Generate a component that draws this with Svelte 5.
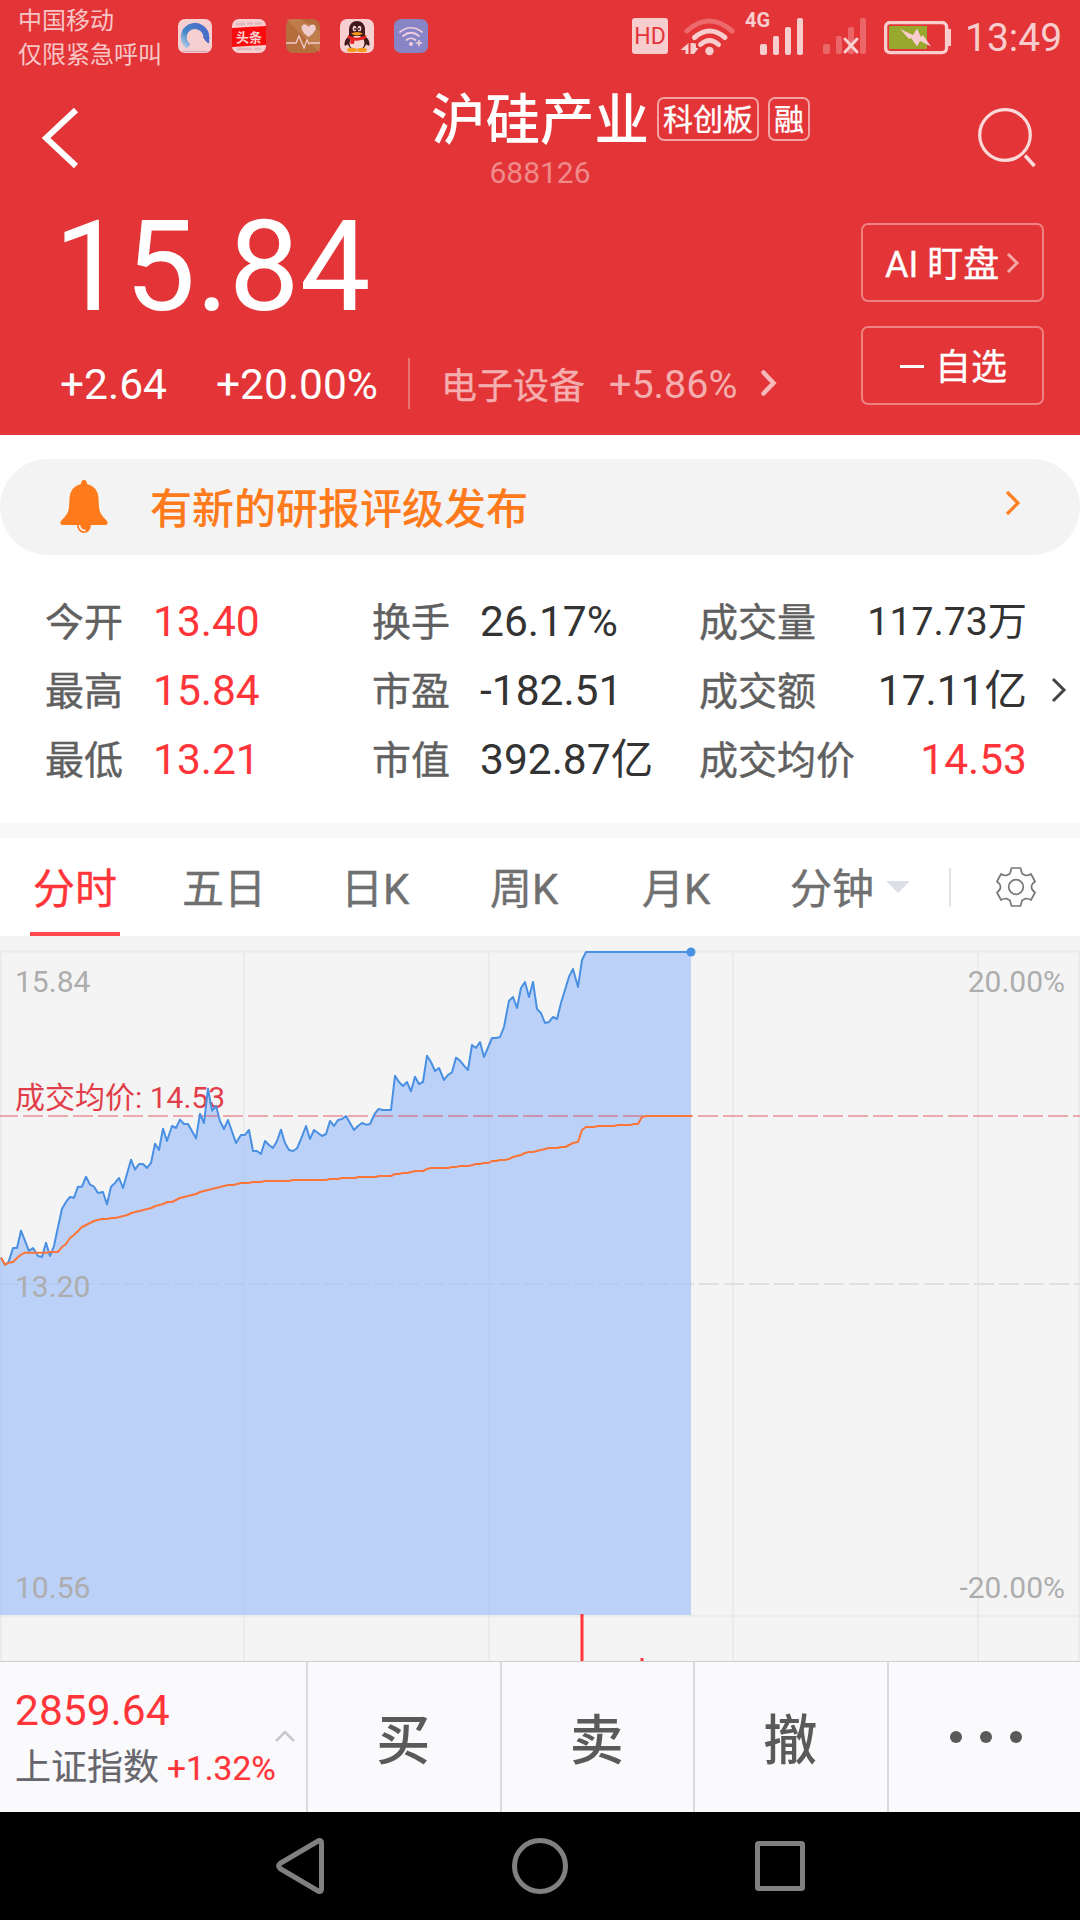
<script>
  const stats = [
    [
      { label: '今开', value: '13.40', up: true },
      { label: '最高', value: '15.84', up: true },
      { label: '最低', value: '13.21', up: true }
    ],
    [
      { label: '换手', value: '26.17%' },
      { label: '市盈', value: '-182.51' },
      { label: '市值', value: '392.87亿' }
    ],
    [
      { label: '成交量', value: '117.73万', compact: true },
      { label: '成交额', value: '17.11亿' },
      { label: '成交均价', value: '14.53', up: true }
    ]
  ];

  const actions = ['买', '卖', '撤'];

  // Intraday series, in thirds of a pixel, relative to the chart's scaled group.
  const price =
    '3,983 15,1004 26,995 39,954 51,954 63,902 87,963 99,954 114,978 126,981 138,938 150,978 162,948 174,891 186,836 198,816 210,801 222,803 234,770 246,770 258,740 270,764 282,770 294,789 309,786 321,823 333,770 345,759 357,744 369,774 393,689 405,719 417,702 429,702 441,714 453,699 465,641 477,660 489,596 501,633 516,588 528,594 540,569 552,582 564,582 588,625 600,551 612,579 624,476 636,542 648,528 660,573 672,597 684,570 708,639 723,615 735,615 747,600 759,663 771,663 783,672 795,633 807,645 819,654 831,633 843,599 855,639 867,660 879,663 891,655 903,627 918,588 930,627 942,600 966,618 978,612 990,573 1002,588 1014,570 1026,567 1038,558 1062,600 1074,588 1086,579 1098,584 1110,582 1124,552 1136,537 1148,540 1173,540 1185,437 1197,456 1209,468 1221,456 1233,484 1245,440 1257,462 1269,456 1281,377 1293,396 1305,423 1317,414 1332,450 1344,435 1356,427 1368,383 1380,392 1392,407 1404,420 1416,345 1428,354 1440,336 1452,381 1476,324 1488,324 1500,321 1512,291 1527,212 1539,201 1551,234 1563,174 1575,156 1587,201 1599,156 1611,237 1623,249 1635,279 1647,276 1659,261 1671,267 1683,219 1707,140 1719,117 1734,171 1746,90 1758,66 2073,66';
  const average =
    '3,983 15,1004 27,998 39,996 51,984 63,974 75,968 138,968 150,966 174,966 186,951 198,942 210,924 222,915 246,891 258,885 282,873 306,867 322,867 334,864 346,864 382,855 394,849 454,834 466,828 490,822 502,816 516,816 540,804 588,792 600,786 624,780 684,765 700,765 722,759 746,759 758,756 782,756 794,753 867,753 879,750 978,750 990,747 1014,747 1026,744 1066,744 1074,741 1126,741 1138,738 1173,738 1185,732 1197,732 1209,729 1221,729 1245,723 1269,723 1281,717 1293,714 1344,714 1356,711 1368,711 1380,708 1406,708 1428,702 1440,702 1452,699 1466,699 1476,693 1488,693 1500,690 1514,690 1527,687 1539,681 1563,675 1575,669 1587,666 1599,666 1635,657 1647,654 1671,654 1683,651 1696,651 1719,639 1734,636 1746,600 1758,591 1782,591 1794,588 1842,588 1854,585 1890,585 1902,582 1914,582 1926,561 1940,558 2076,558';
  const gridX = [1, 244, 489, 733, 978, 1079];
</script>

<div class="screen">
  <header>
    <div class="status">
      <div class="carrier"><span>中国移动</span><span>仅限紧急呼叫</span></div>
      <div class="apps">
        <svg viewBox="0 0 34 34">
          <defs>
            <linearGradient id="ring" gradientUnits="userSpaceOnUse" x1="8" y1="30" x2="28" y2="10">
              <stop offset="0" stop-color="#b5cfe6" /><stop offset=".4" stop-color="#4488c8" /><stop offset="1" stop-color="#4a6cc8" />
            </linearGradient>
          </defs>
          <rect width="34" height="34" rx="7" fill="#f8cfd1" />
          <path d="M5 32.500H29" stroke="#d9a3b4" stroke-width="1.200" />
          <path d="M10.500 27.500A11.300 11.300 0 1 1 28.300 19" fill="none" stroke="url(#ring)" stroke-width="6" />
          <path d="M25 18H31.300L31 24.500Q28 23.500 25 18Z" fill="#4a6cc8" />
        </svg>
        <svg viewBox="0 0 34 34">
          <rect width="34" height="34" rx="7" fill="#f8cfd1" />
          <path d="M4 5h9M15 4.500h6M23 4.500h7M5 30h15M22 30h7" stroke="#dfb9bb" stroke-width="2.500" />
          <path d="M0 9L34 7V26L0 28Z" fill="#fb0b0d" />
          <text x="17" y="22.500" class="toutiao">头条</text>
        </svg>
        <svg viewBox="0 0 34 34">
          <rect width="34" height="34" rx="7" fill="#b66d3e" />
          <path d="M0 0L34 34V12L14 0Z" fill="#d09a68" opacity=".35" />
          <path d="M22.500 18C13 11 15 5 19 5.500Q22 6 22.500 8Q24 5 27 5.500C31 6 32 12 22.500 18Z" fill="#f1cccc" />
          <path d="M0 24H10L13 17L18 29L21 21L23 25L25 24H34" fill="none" stroke="#f1cccc" stroke-width="1.300" />
        </svg>
        <svg viewBox="0 0 34 34">
          <rect width="34" height="34" rx="7" fill="#f8cfd1" />
          <path d="M9 17Q3 22 5 27L10 24ZM25 17Q31 22 29 27L24 24Z" fill="#43191b" />
          <ellipse cx="17" cy="23" rx="9.500" ry="9" fill="#43191b" />
          <ellipse cx="17" cy="24" rx="7.500" ry="7.500" fill="#f8d4d5" />
          <path d="M9 17V10Q10 2 17 2T25 10V17Z" fill="#43191b" />
          <ellipse cx="14.500" cy="9.500" rx="1.900" ry="2.700" fill="#f8d4d5" /><ellipse cx="19.500" cy="9.500" rx="1.900" ry="2.700" fill="#f8d4d5" />
          <circle cx="15" cy="10" r="1" fill="#43191b" /><circle cx="19" cy="10" r="1" fill="#43191b" />
          <path d="M11 14.500Q17 11.500 23 14.500Q17 18.500 11 14.500Z" fill="#f89a1c" />
          <path d="M8 16Q17 21.500 26 16L26.500 19Q20 22.500 14.500 21.500L14 25L10 24.500L10.500 20.500L7.500 19Z" fill="#e5221f" />
          <ellipse cx="12" cy="31" rx="5" ry="2.200" fill="#f89a1c" /><ellipse cx="22" cy="31" rx="5" ry="2.200" fill="#f89a1c" />
        </svg>
        <svg viewBox="0 0 34 34">
          <rect width="34" height="34" rx="7" fill="#8785c5" />
          <g fill="none" stroke="#f1cfe0" stroke-width="1.700" stroke-linecap="round">
            <path d="M6 13Q17 4.500 28 13M9 17Q17 10.500 25 17M12.500 21Q17 17.500 21.500 21M22.500 24H27.500M25 21.500V26.500" />
          </g>
          <circle cx="17" cy="25" r="2" fill="#f1cfe0" />
        </svg>
      </div>
      <div class="signals">
        <span class="hd">HD</span>
        <svg class="wifi" viewBox="0 0 56 40">
          <path d="M7 13Q29 -7 52 13" fill="none" stroke="#ed6a6c" stroke-width="5" stroke-linecap="round" />
          <path d="M14.500 19.500Q29.500 6.500 45 19.500M20.500 26.500Q29.500 18.500 38.500 26.500" fill="none" stroke="#f8cdce" stroke-width="5" stroke-linecap="round" />
          <circle cx="29.500" cy="33" r="4.200" fill="#f8cdce" />
          <path d="M8.500 25V36H5.500V32H0.500ZM10.500 25H14V36H10.500ZM14 36V25.500H16V30H18.500Z" fill="#f8cdce" />
        </svg>
        <svg class="bars" viewBox="0 0 62 48">
          <text x="0" y="18" class="lte">4G</text>
          <g fill="#f8cdce"><rect x="15" y="35" width="7" height="11" rx="2" /><rect x="28" y="27" width="6" height="19" rx="2" /><rect x="40" y="18" width="6" height="28" rx="2" /><rect x="52" y="9" width="6" height="37" rx="2" /></g>
        </svg>
        <svg class="nosim" viewBox="0 0 44 38">
          <g fill="#ea6668"><rect x="0" y="26" width="7" height="10" rx="2" /><rect x="13" y="18" width="6" height="18" rx="2" /><rect x="25" y="9" width="6" height="27" rx="2" /><rect x="37" y="0" width="6" height="36" rx="2" /></g>
          <path d="M22 21L34 34M34 21L22 34" stroke="#f8d0d1" stroke-width="3" stroke-linecap="round" />
        </svg>
        <svg class="battery" viewBox="0 0 68 34">
          <rect x="1.600" y="1.600" width="61" height="30" rx="4.500" fill="none" stroke="#f8cdce" stroke-width="3.400" />
          <rect x="64" y="8" width="3" height="17" fill="#f8cdce" />
          <rect x="5" y="5" width="38" height="23" fill="#98a72e" />
          <path d="M16 8L29 14L33 7.500L37 16L39 14L47 25.500L36 20L33 25.500L27 17L25 18Z" fill="#f8cdce" />
        </svg>
        <span class="clock">13:49</span>
      </div>
    </div>

    <div class="nav">
      <svg class="back" viewBox="0 0 38 62"><path d="M34 3L4 31L34 59" fill="none" stroke="#fff" stroke-width="6" /></svg>
      <div class="heading">
        <div class="name"><h1>沪硅产业</h1><span class="badge">科创板</span><span class="badge">融</span></div>
        <div class="code">688126</div>
      </div>
      <svg class="search" viewBox="0 0 60 62"><circle cx="27" cy="27" r="25.300" fill="none" stroke="#fbd9d9" stroke-width="3.200" /><path d="M47 47.500L56.500 58" stroke="#fbd9d9" stroke-width="3.600" /></svg>
    </div>

    <div class="quote">
      <div class="left">
        <div class="price">15.84</div>
        <div class="change">
          <span class="delta">+2.64</span><span class="pct">+20.00%</span>
          <div class="sector">
            <span class="sname">电子设备</span><span class="spct">+5.86%</span>
            <svg viewBox="0 0 16 26"><path d="M2.500 2.500L12.500 13L2.500 23.500" fill="none" stroke="#f6b9ba" stroke-width="4.500" stroke-linecap="round" /></svg>
          </div>
        </div>
      </div>
      <div class="buttons">
        <button><span>AI 盯盘</span><svg class="aichev" viewBox="0 0 14 22"><path d="M2 2L11 11L2 20" fill="none" stroke="#f4a6a7" stroke-width="3" /></svg></button>
        <button class="second"><i class="dash"></i><span>自选</span></button>
      </div>
    </div>
  </header>

  <div class="notice">
    <svg class="bell" viewBox="0 0 48 54">
      <path d="M24 0Q27 0 27 4Q38 7 38.500 18C39 31 39 33 47 41Q49 45 45 45H3Q-1 45 1 41C9 33 9 31 9.500 18Q10 7 21 4Q21 0 24 0Z" fill="#ff7a1b" />
      <path d="M17 44C17 56 31 56 31 44Z" fill="#ff7a1b" />
      <path d="M19.500 45Q20 50.500 25.500 50.500" fill="none" stroke="#f3f3f3" stroke-width="1.800" />
    </svg>
    <span>有新的研报评级发布</span>
    <svg class="nchev" viewBox="0 0 16 26"><path d="M2 2L13 13L2 24" fill="none" stroke="#ff7f24" stroke-width="3.200" /></svg>
  </div>

  <section class="stats">
    {#each stats as column}
      <dl>
        {#each column as item}
          <div><dt>{item.label}</dt><dd class:up={item.up} class:compact={item.compact}>{item.value}</dd></div>
        {/each}
      </dl>
    {/each}
    <svg class="schev" viewBox="0 0 16 26"><path d="M2 2L13 13L2 24" fill="none" stroke="#444" stroke-width="3" /></svg>
  </section>

  <nav class="tabs">
    <span class="tab active">分时</span>
    <span class="tab t2">五日</span>
    <span class="tab t3">日K</span>
    <span class="tab t4">周K</span>
    <span class="tab t5">月K</span>
    <span class="tab t6">分钟</span>
    <i class="tri"></i>
    <i class="sep"></i>
    <svg class="gear" viewBox="0 0 40 40">
      <path d="M15.500 1H24.500L26 6.500L29.500 8.500Q33 8.500 35 7L39 14.500Q35.500 17 35.500 20T39 25.500L35 33Q33 31.500 29.500 31.500L26 33.500L24.500 39H15.500L14 33.500L10.500 31.500Q7 31.500 5 33L1 25.500Q4.500 23 4.500 20T1 14.500L5 7Q7 8.500 10.500 8.500L14 6.500Z" />
      <circle cx="20" cy="20" r="7.300" />
    </svg>
  </nav>

  <svg class="chart" viewBox="0 0 1080 725">
    <g fill="none" stroke="#ebebeb" stroke-width="2">
      {#each gridX as x}<path d="M{x} 15V725" />{/each}
      <path d="M0 15.500H1080M0 680H1080" stroke-width="2.500" />
    </g>
    <path d="M0 348H1080" stroke="#e0e0e0" stroke-width="2" stroke-dasharray="20 5" stroke-dashoffset="1" />
    <g transform="scale(.33333) translate(0 -18)">
      <polygon points="0,983 {price} 2073,2055 0,2055" fill="#a4c2fa" fill-opacity=".7" />
    </g>
    <text x="15" y="172" class="avg">成交均价: 14.53</text>
    <path d="M0 180H1080" stroke="#e23e4a" stroke-opacity=".42" stroke-width="2" stroke-dasharray="20 5" stroke-dashoffset="2" />
    <g transform="scale(.33333) translate(0 -18)" fill="none" stroke-linejoin="round">
      <polyline points={price} stroke="#4a90e2" stroke-width="6" />
      <polyline points={average} stroke="#fb7438" stroke-width="6" />
    </g>
    <circle cx="691" cy="16" r="4.500" fill="#4a90e2" />
    <g class="axis">
      <text x="15" y="56">15.84</text>
      <text x="15" y="361">13.20</text>
      <text x="15" y="662">10.56</text>
      <text x="1065" y="56" text-anchor="end">20.00%</text>
      <text x="1065" y="662" text-anchor="end">-20.00%</text>
    </g>
    <path d="M582 678V725M642 722V725" stroke="#ff3539" stroke-width="3" />
  </svg>

  <footer>
    <div class="index">
      <div class="ival">2859.64</div>
      <div class="iname">上证指数 <b>+1.32%</b></div>
      <svg class="caret" viewBox="0 0 20 12"><path d="M1 11L10 2L19 11" fill="none" stroke="#c9c9cb" stroke-width="2.600" /></svg>
    </div>
    {#each actions as action}<div class="action">{action}</div>{/each}
    <div class="action more"><i></i><i></i><i></i></div>
  </footer>

  <div class="system">
    <svg viewBox="0 0 48 56"><path d="M43 2.500Q45.500 2.500 45.500 5V51Q45.500 53.500 43 53.500L4 30.500Q1.500 28 4 25.500Z" fill="none" stroke="#808080" stroke-width="5" stroke-linejoin="round" /></svg>
    <svg class="home" viewBox="0 0 56 56"><circle cx="28" cy="28" r="25.500" fill="none" stroke="#808080" stroke-width="5" /></svg>
    <svg class="recent" viewBox="0 0 50 50"><rect x="2.500" y="2.500" width="45" height="45" rx="1" fill="none" stroke="#808080" stroke-width="5" /></svg>
  </div>
</div>

<style>
  :global(body) { margin: 0; background: #fff; }
  .screen { width: 1080px; height: 1920px; overflow: hidden; display: flex; flex-direction: column; background: #fff; font-family: Roboto, "Noto Sans CJK SC", sans-serif; color: #333; }
  .screen :global(*) { box-sizing: border-box; }
  svg { display: block; flex: none; }
  h1, dl, dd, dt { margin: 0; font-weight: 400; }
  header { height: 435px; background: #e33537; color: #fff; display: flex; flex-direction: column; flex: none; }

  .status { height: 74px; display: flex; align-items: flex-start; padding-left: 18px; color: #f8c5c6; }
  .carrier { width: 160px; display: flex; flex-direction: column; padding-top: 4px; font-size: 24px; line-height: 34px; white-space: nowrap; }
  .apps { display: flex; gap: 20px; padding-top: 19px; }
  .apps svg { width: 34px; height: 34px; }
  .toutiao { font-size: 13px; font-weight: 700; fill: #fbd5d5; text-anchor: middle; }
  .signals { display: flex; align-items: flex-start; margin-left: 204px; }
  .hd { width: 36px; height: 36px; margin-top: 18px; border-radius: 3px; background: #f8cdce; color: #e33537; font-size: 23px; line-height: 37px; text-align: center; }
  .wifi { width: 56px; height: 40px; margin: 18px 0 0 12px; }
  .bars { width: 62px; height: 48px; margin: 9px 0 0 9px; }
  .lte { font-size: 20px; font-weight: 700; fill: #f8cdce; }
  .nosim { width: 44px; height: 38px; margin: 18px 0 0 16px; }
  .battery { width: 68px; height: 34px; margin: 21px 0 0 17px; }
  .clock { font-size: 39px; line-height: 48px; margin: 14px 0 0 13px; color: #f8cdce; }

  .nav { height: 126px; display: flex; align-items: flex-start; }
  .back { width: 38px; height: 62px; margin: 33px 0 0 42px; }
  .heading { width: 380px; margin-left: 351px; }
  .name { display: flex; align-items: center; height: 90px; white-space: nowrap; }
  h1 { flex: none; width: 216px; padding-top: 2px; font-size: 54.500px; line-height: 90px; font-weight: 500; }
  .badge { flex: none; height: 44px; padding: 0 4px; margin: 1px 0 0 9px; border: 2px solid #f2a2a3; border-radius: 7px; font-size: 30px; line-height: 42px; -webkit-text-stroke: .3px; }
  h1 + .badge { margin-left: 10px; }
  .code { width: 218px; height: 36px; margin-top: -9px; text-align: center; font-size: 30px; line-height: 36px; color: #ef8a8b; }
  .search { width: 60px; height: 62px; margin: 34px 0 0 167px; }

  .quote { display: flex; flex: 1; }
  .left { width: 861px; padding-left: 54px; }
  .price { height: 132px; font-size: 126px; line-height: 136px; }
  .change { display: flex; align-items: center; height: 104px; font-size: 42.500px; line-height: 50px; }
  .delta { width: 156px; padding: 4px 0 0 6px; }
  .pct { width: 198px; padding: 4px 0 0 6px; }
  .sector { display: flex; align-items: center; height: 51px; padding-left: 31px; border-left: 2px solid #eb7273; color: #f4aeaf; }
  .sname { font-size: 36px; width: 168px; padding-top: 7px; -webkit-text-stroke: .3px; }
  .spct { font-size: 39.500px; width: 152px; padding-top: 4px; }
  .sector svg { width: 16px; height: 26px; }
  .buttons { padding-top: 24px; display: flex; flex-direction: column; gap: 24px; }
  button { width: 183px; height: 79px; padding: 0; background: none; border: 2px solid #ee8283; border-radius: 7px; color: #fff; font: 36px/75px Roboto, "Noto Sans CJK SC", sans-serif; display: flex; align-items: center; padding-left: 22px; white-space: pre; }
  button span { padding-top: 6px; -webkit-text-stroke: .3px; }
  .aichev { width: 14px; height: 22px; margin: 1px 0 0 7px; }
  .second { padding-left: 37px; }
  .dash { width: 24px; height: 3px; background: #fff; margin: 2px 11px 0 0; }

  .notice { height: 96px; margin-top: 24px; flex: none; display: flex; align-items: center; background: #f3f3f3; border-radius: 48px; padding: 0 59px 0 60px; color: #ff7a1b; font-size: 42px; line-height: 60px; font-weight: 500; }
  .notice span { flex: 1; margin-left: 42px; padding-top: 5px; }
  .bell { width: 48px; height: 54px; }
  .nchev { width: 16px; height: 26px; margin-top: -9px; }

  .stats { height: 283px; flex: none; display: flex; align-items: flex-start; padding: 32px 0 0 45px; border-bottom: 15px solid #f8f8f8; }
  dl > div { display: flex; height: 69px; line-height: 69px; white-space: nowrap; }
  dl { width: 327px; }
  dt { width: 108px; padding-top: 2px; font-size: 39px; color: #606060; -webkit-text-stroke: .4px; }
  dd { font-size: 42.500px; }
  .up { color: #ff3539; }
  dl:nth-child(3) { width: 328px; }
  dl:nth-child(3) > div { justify-content: space-between; }
  dl:nth-child(3) dt { width: auto; }
  .compact { font-size: 39.200px; padding-top: 1px; }
  .schev { width: 16px; height: 26px; margin: 90px 0 0 24px; }

  .tabs { height: 98px; flex: none; display: flex; align-items: center; font-size: 42px; line-height: 98px; color: #707070; }
  .tab { height: 98px; padding-top: 3px; -webkit-text-stroke: .4px; }
  .active { width: 90px; margin-left: 30px; padding: 3px 0 0 3px; color: #ff3539; border-bottom: 4px solid #ff4a4d; }
  .t2 { margin-left: 62px; width: 159px; }
  .t3 { width: 149px; }
  .t4 { width: 152px; }
  .t5 { width: 148px; }
  .t6 { width: 96px; }
  .tri { border: 12.500px solid transparent; border-top-color: #dcdfe5; border-bottom: 0; }
  .sep { width: 2px; height: 39px; margin-left: 39px; background: #e2e2e4; }
  .gear { width: 40px; height: 40px; margin-left: 45px; fill: none; stroke: #777; stroke-width: 1.700; stroke-linejoin: round; }

  .chart { width: 1080px; height: 725px; background: #f4f4f4; }
  .avg { font-size: 30px; fill: #e23e4a; }
  .axis { font-size: 30px; fill: #adadad; }

  footer { height: 151px; flex: none; display: flex; background: #fafafc; border-top: 1px solid #cfcfcf; }
  .index { position: relative; flex: none; width: 306px; padding: 24px 0 0 15px; white-space: nowrap; }
  .ival { font-size: 42.500px; line-height: 50px; color: #ff3539; }
  .iname { font-size: 36px; line-height: 65px; color: #66666c; -webkit-text-stroke: .2px; }
  .iname b { font-size: 33.500px; font-weight: 400; color: #ff3539; margin-left: -1px; }
  .caret { position: absolute; left: 275px; top: 68px; width: 20px; height: 12px; }
  .action { flex: none; width: 193.500px; padding-right: 1px; border-left: 2px solid #dadadc; text-align: center; font-size: 54px; line-height: 159px; color: #5a5a5a; font-weight: 500; }
  .more { display: flex; align-items: center; justify-content: center; gap: 18px; padding-left: 4px; }
  .more i { width: 12px; height: 12px; border-radius: 50%; background: #5a5a5a; }

  .system { height: 108px; flex: none; background: #000; display: flex; align-items: center; padding-left: 276px; }
  .system svg { width: 48px; height: 56px; }
  .system .home { width: 56px; margin-left: 188px; }
  .system .recent { width: 50px; height: 50px; margin-left: 187px; }
</style>
